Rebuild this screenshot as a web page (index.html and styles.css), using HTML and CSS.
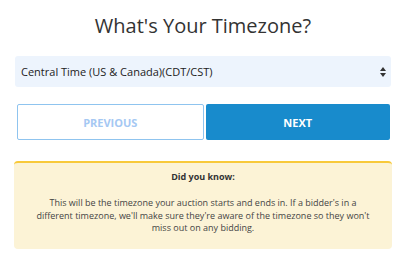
FILE: index.html
```html
<!DOCTYPE html>
<html>
<head>
<meta charset="utf-8">
<link rel="stylesheet" href="styles.css">
</head>
<body>
<div class="page">
  <h1 class="title">What's Your Timezone?</h1>
  <div class="select">
    <span class="select-text">Central Time (US &amp; Canada)(CDT/CST)</span>
    <svg class="arrows" width="6" height="10" viewBox="0 0 6 10"><path d="M3 0 L6 4 L0 4 Z M0 6 L6 6 L3 10 Z" fill="#333"/></svg>
  </div>
  <div class="buttons">
    <div class="btn btn-prev">PREVIOUS</div>
    <div class="btn btn-next">NEXT</div>
  </div>
  <div class="tip">
    <div class="tip-title">Did you know:</div>
    <p class="tip-text">This will be the timezone your auction starts and ends in. If a bidder's in a different timezone, we'll make sure they're aware of the timezone so they won't miss out on any bidding.</p>
  </div>
</div>
</body>
</html>
```
FILE: styles.css
```css
html, body {
  margin: 0;
  padding: 0;
  background: #fff;
}
body {
  font-family: "Open Sans", "Liberation Sans", sans-serif;
  color: #333;
}
.page {
  width: 376px;
  padding: 11px 15px 0;
}
.title {
  margin: 0;
  font-weight: 400;
  font-size: 20px;
  line-height: 30px;
  text-align: center;
  color: #333;
}
.select {
  margin-top: 15px;
  height: 31px;
  background: #edf4fd;
  border-radius: 3px;
  display: flex;
  align-items: center;
  justify-content: space-between;
  padding: 0 5px 0 6px;
}
.select-text {
  font-size: 11px;
  color: #222;
}
.arrows {
  display: block;
}
.buttons {
  display: flex;
  gap: 2px;
  margin: 17px 1px 0 2px;
}
.btn {
  flex: 1;
  height: 36px;
  box-sizing: border-box;
  border-radius: 2px;
  display: flex;
  align-items: center;
  justify-content: center;
  font-size: 11px;
  font-weight: 700;
}
.btn-prev {
  border: 1px solid #8fc4ef;
  color: #a5c8f3;
  background: #fff;
}
.btn-next {
  background: #188bcc;
  color: #fff;
}
.tip {
  margin: 21px -1px 0;
  background: #fcf3d6;
  border-top: 2px solid #f8c93a;
  border-radius: 4px;
  padding: 7px 22px 14px;
  text-align: center;
}
.tip-title {
  font-size: 9px;
  font-weight: 700;
  color: #333;
  line-height: 14px;
}
.tip-text {
  margin: 13px 0 0;
  font-size: 9px;
  line-height: 12.6px;
  color: #444;
}
```
